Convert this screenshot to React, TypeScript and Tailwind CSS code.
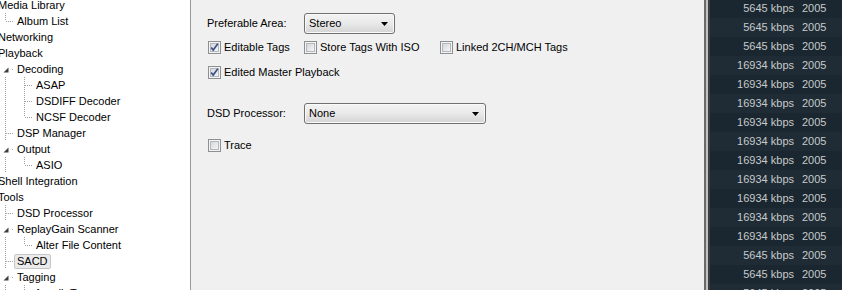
import React from 'react';

type Seg = [number, number, number, number];

interface TreeRow {
  text: string;
  level: 0 | 1 | 2;
  expanded?: boolean;
  selected?: boolean;
  segs?: Seg[];
}

// dotted guide pieces, in gutter coordinates (row is 16px high)
const V5: Seg = [5.5, 0, 5.5, 16];
const V5top: Seg = [5.5, 0, 5.5, 8];
const H5: Seg = [6, 8.5, 14, 8.5];
const V24: Seg = [24.5, 0, 24.5, 16];
const V24top: Seg = [24.5, 0, 24.5, 8];
const H24: Seg = [25, 8.5, 33, 8.5];

const tree: TreeRow[] = [
  { text: 'Media Library', level: 0 },
  { text: 'Album List', level: 1, segs: [V5top, H5] },
  { text: 'Networking', level: 0 },
  { text: 'Playback', level: 0 },
  { text: 'Decoding', level: 1, expanded: true },
  { text: 'ASAP', level: 2, segs: [V5, V24, H24] },
  { text: 'DSDIFF Decoder', level: 2, segs: [V5, V24, H24] },
  { text: 'NCSF Decoder', level: 2, segs: [V5, V24top, H24] },
  { text: 'DSP Manager', level: 1, segs: [V5, H5] },
  { text: 'Output', level: 1, expanded: true },
  { text: 'ASIO', level: 2, segs: [V5, V24top, H24] },
  { text: 'Shell Integration', level: 0 },
  { text: 'Tools', level: 0 },
  { text: 'DSD Processor', level: 1, segs: [V5, H5] },
  { text: 'ReplayGain Scanner', level: 1, expanded: true },
  { text: 'Alter File Content', level: 2, segs: [V5, V24top, H24] },
  { text: 'SACD', level: 1, selected: true, segs: [V5, H5] },
  { text: 'Tagging', level: 1, expanded: true },
  { text: 'freedb Tagger', level: 2, segs: [V5, V24, H24] },
];

const bitrates = [
  5645, 5645, 5645, 16934, 16934, 16934, 16934, 16934, 16934, 16934, 16934, 16934, 16934, 5645, 5645, 5645,
];

function Gutter({ row }: { row: TreeRow }) {
  const w = row.level === 1 ? 14 : 33;
  return (
    <svg width={w} height="16" viewBox={`0 0 ${w} 16`} className="shrink-0">
      {(row.segs || []).map((s, i) => (
        <line key={i} x1={s[0]} y1={s[1]} x2={s[2]} y2={s[3]} stroke="#a0a0a0" strokeDasharray="1 1" />
      ))}
      {row.expanded && (
        <>
          <path d="M8.5 6.5 L8.5 11.5 L3.5 11.5 Z" fill="#3f3f3f" />
          <rect x="12" y="8" width="1" height="1" fill="#a0a0a0" />
        </>
      )}
    </svg>
  );
}

function Tree() {
  return (
    <div className="w-[191px] shrink-0 overflow-hidden border-r border-[#9a9a9a] bg-white text-black">
      <div className="mt-[-3px] flex flex-col">
        {tree.map((row) => (
          <div key={row.text} className="flex h-4 items-center whitespace-nowrap">
            {row.level > 0 && <Gutter row={row} />}
            <span
              className={`h-[15px] rounded-[2px] border px-[2px] leading-[13px] ${
                row.level === 0 ? 'ml-[-5px]' : ''
              } ${row.selected ? 'border-[#c6c6c6] bg-[#ebebeb]' : 'border-transparent'}`}
            >
              {row.text}
            </span>
          </div>
        ))}
      </div>
    </div>
  );
}

function Check({ on }: { on?: boolean }) {
  return (
    <svg width="13" height="13" viewBox="0 0 13 13" className="shrink-0">
      <defs>
        <linearGradient id="cb-fill" x1="0" y1="0" x2="1" y2="1">
          <stop offset="0" stopColor="#d2d5da" />
          <stop offset="1" stopColor="#f7f7f7" />
        </linearGradient>
      </defs>
      <rect x="0.5" y="0.5" width="12" height="12" fill="#f4f4f4" stroke="#8e8f8f" />
      <rect x="2.5" y="2.5" width="8" height="8" fill="url(#cb-fill)" stroke="#b4b8be" />
      {on && <path d="M3.2 6.4 L5.2 9 L9.8 2.8" fill="none" stroke="#3d5188" strokeWidth="1.7" />}
    </svg>
  );
}

function CheckItem({ label, on, className = '' }: { label: string; on?: boolean; className?: string }) {
  return (
    <div className={`flex h-[13px] items-center gap-[3px] whitespace-nowrap ${className}`}>
      <Check on={on} />
      <span>{label}</span>
    </div>
  );
}

function Combo({ value, className }: { value: string; className: string }) {
  return (
    <div
      className={`flex h-[21px] items-center justify-between rounded-[3px] border border-[#707070] bg-linear-to-b from-[#f3f3f3] via-[#e9e9e9] to-[#d4d4d4] pl-[4px] pr-[6px] shadow-[inset_0_0_0_1px_#fafafa] ${className}`}
    >
      <span>{value}</span>
      <svg width="7" height="4" viewBox="0 0 7 4">
        <path d="M0 0 H7 L3.5 4 Z" fill="#000" />
      </svg>
    </div>
  );
}

function Settings() {
  return (
    <div className="flex-1 bg-[#f0f0f0] pl-[16px] text-black">
      <div className="mt-[13px] flex items-center">
        <span className="w-[97px]">Preferable Area:</span>
        <Combo value="Stereo" className="w-[91px]" />
      </div>
      <div className="ml-[1px] mt-[7px] flex">
        <CheckItem label="Editable Tags" on className="w-[96px]" />
        <CheckItem label="Store Tags With ISO" className="w-[136px]" />
        <CheckItem label="Linked 2CH/MCH Tags" />
      </div>
      <CheckItem label="Edited Master Playback" on className="ml-[1px] mt-[12px]" />
      <div className="mt-[24px] flex items-center">
        <span className="w-[97px]">DSD Processor:</span>
        <Combo value="None" className="w-[182px]" />
      </div>
      <CheckItem label="Trace" className="ml-[1px] mt-[15px]" />
    </div>
  );
}

function Playlist() {
  return (
    <div className="w-[132px] shrink-0 overflow-hidden bg-[#1c2832] text-[#c6caca]">
      <div className="mt-[-1px] flex flex-col">
        {bitrates.map((b, i) => (
          <div
            key={i}
            className={`flex h-[19px] items-center whitespace-nowrap ${i % 2 ? 'bg-[#1f2c36]' : 'bg-[#1b2730]'}`}
          >
            <span className="w-[88px] pr-[4px] text-right">{b} kbps</span>
            <span className="pl-[4px]">2005</span>
          </div>
        ))}
      </div>
    </div>
  );
}

export default function App() {
  return (
    <div className="flex h-[290px] w-[842px] overflow-hidden font-['Liberation_Sans',Arial,sans-serif] text-[11px]">
      <Tree />
      <Settings />
      <div className="flex shrink-0">
        <div className="w-[2px] bg-[#6a6a6a]" />
        <div className="w-[2px] bg-[#c2c2c2]" />
        <div className="w-[2px] bg-[#3e3e3e]" />
      </div>
      <Playlist />
    </div>
  );
}
